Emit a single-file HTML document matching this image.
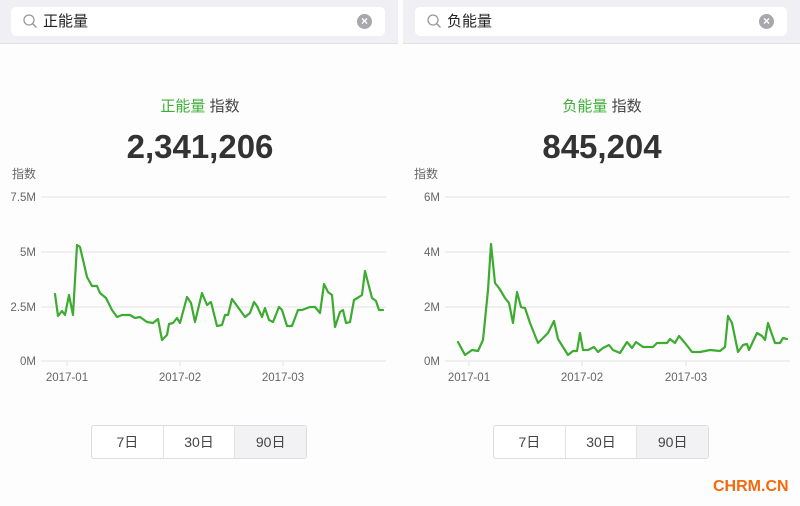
<!DOCTYPE html>
<html><head><meta charset="utf-8"><style>
*{margin:0;padding:0;box-sizing:border-box}
body{width:800px;height:506px;background:#fdfdfe;position:relative;overflow:hidden;font-family:"Liberation Sans","Noto Sans CJK SC",sans-serif;color:#333}
.hdr{position:absolute;top:0;height:44px;background:#efeff4;border-bottom:1px solid #e2e2e6}
.sb{position:absolute;top:7px;height:29px;background:#fff;border-radius:5px}
.sb .t{position:absolute;left:32px;top:3px;font-size:15px;color:#222}
.sb .x{position:absolute;right:13px;top:7px;width:15px;height:15px;border-radius:50%;background:#a8a8ac;color:#fff;font-size:12px;line-height:15px;text-align:center;font-weight:bold}
.title{position:absolute;top:95px;font-size:15px;text-align:center;width:400px;color:#444}
.title b{color:#3cb034;font-weight:normal}
.num{position:absolute;top:128px;font-size:33px;font-weight:bold;text-align:center;width:400px;color:#333}
.lbl{position:absolute;top:165px;font-size:12px;color:#666}
.btns{position:absolute;top:425px;height:34px;width:216px;border:1px solid #ddd;border-radius:3px;display:flex;background:#fff}
.btns div{flex:1;text-align:center;line-height:32px;font-size:14px;color:#444;border-right:1px solid #e2e2e2}
.btns div:last-child{border-right:none;background:#f2f2f4}
.wm{position:absolute;left:713px;top:478px;color:#f26a0d;font-weight:bold;font-size:16px}
</style></head><body>
<div class="hdr" style="left:0;width:398px"></div>
<div class="hdr" style="left:403px;width:397px"></div>
<div class="sb" style="left:11px;width:374px"><svg style="position:absolute;left:12px;top:7px" width="15" height="15"><circle cx="6" cy="6" r="5" fill="none" stroke="#999" stroke-width="1.3"/><line x1="9.5" y1="9.5" x2="13.5" y2="13.5" stroke="#999" stroke-width="1.4"/></svg><span class="t">正能量</span><span class="x">×</span></div>
<div class="sb" style="left:415px;width:372px"><svg style="position:absolute;left:12px;top:7px" width="15" height="15"><circle cx="6" cy="6" r="5" fill="none" stroke="#999" stroke-width="1.3"/><line x1="9.5" y1="9.5" x2="13.5" y2="13.5" stroke="#999" stroke-width="1.4"/></svg><span class="t">负能量</span><span class="x">×</span></div>

<div class="title" style="left:0"><b>正能量</b> 指数</div>
<div class="title" style="left:402px"><b>负能量</b> 指数</div>
<div class="num" style="left:0">2,341,206</div>
<div class="num" style="left:402px">845,204</div>
<div class="lbl" style="left:12px">指数</div>
<div class="lbl" style="left:414px">指数</div>

<svg style="position:absolute;left:0;top:0" width="800" height="400" font-family="Liberation Sans" font-size="11.5" fill="#666">
<g stroke="#e3e3e6" stroke-width="1">
<line x1="41" y1="197" x2="386" y2="197"/><line x1="41" y1="252" x2="386" y2="252"/><line x1="41" y1="307" x2="386" y2="307"/><line x1="41" y1="361" x2="386" y2="361"/>
<line x1="445" y1="197" x2="790" y2="197"/><line x1="445" y1="252" x2="790" y2="252"/><line x1="445" y1="307" x2="790" y2="307"/><line x1="445" y1="361" x2="790" y2="361"/>
<line x1="67" y1="361" x2="67" y2="366"/><line x1="180" y1="361" x2="180" y2="366"/><line x1="283" y1="361" x2="283" y2="366"/>
<line x1="469" y1="361" x2="469" y2="366"/><line x1="582" y1="361" x2="582" y2="366"/><line x1="686" y1="361" x2="686" y2="366"/>
</g>
<g text-anchor="end"><text x="36" y="201">7.5M</text><text x="36" y="256">5M</text><text x="36" y="311">2.5M</text><text x="36" y="365">0M</text>
<text x="440" y="201">6M</text><text x="440" y="256">4M</text><text x="440" y="311">2M</text><text x="440" y="365">0M</text></g>
<g text-anchor="middle"><text x="67" y="381">2017-01</text><text x="180" y="381">2017-02</text><text x="283" y="381">2017-03</text>
<text x="469" y="381">2017-01</text><text x="582" y="381">2017-02</text><text x="686" y="381">2017-03</text></g>
<g fill="none" stroke="#3cab30" stroke-width="2.2" stroke-linejoin="round" stroke-linecap="round">
<polyline points="55,294 58,316 62,311 65,315 69,295 73,315 77,245 80,247 87,277 92,286 97,286 100,293 106,298 112,310 117,317 122,315 130,315 135,318 140,317 147,322 153,323 158,319 162,340 167,335 169,324 173,323 177,318 180,323 187,297 191,303 195,322 202,293 207,305 211,302 217,326 222,325 225,315 228,315 232,299 240,310 245,317 250,313 254,302 257,306 262,317 265,308 269,320 273,322 279,307 282,310 287,326 292,326 298,310 302,310 310,307 315,307 320,313 324,284 328,292 332,295 335,327 340,312 343,310 346,323 350,322 354,300 359,297 362,295 365,271 372,298 376,301 379,310 383,310"/>
<polyline points="458,342 465,355 472,350 478,351 483,340 488,290 491,244 495,283 499,288 505,298 509,303 513,323 517,292 521,307 525,308 530,323 538,343 543,338 548,333 554,321 558,339 563,347 568,355 573,351 577,351 580,333 583,350 588,350 594,347 598,352 603,348 609,345 613,350 620,353 627,342 632,348 636,342 643,347 653,347 657,343 667,343 670,339 675,343 679,336 685,343 692,352 700,352 710,350 720,351 725,347 728,316 732,323 738,352 743,345 747,344 749,350 757,333 762,336 765,340 768,323 775,343 780,343 783,338 787,339"/>
</g>
</svg>

<div class="btns" style="left:91px"><div>7日</div><div>30日</div><div>90日</div></div>
<div class="btns" style="left:493px"><div>7日</div><div>30日</div><div>90日</div></div>
<div class="wm">CHRM.CN</div>
</body></html>
